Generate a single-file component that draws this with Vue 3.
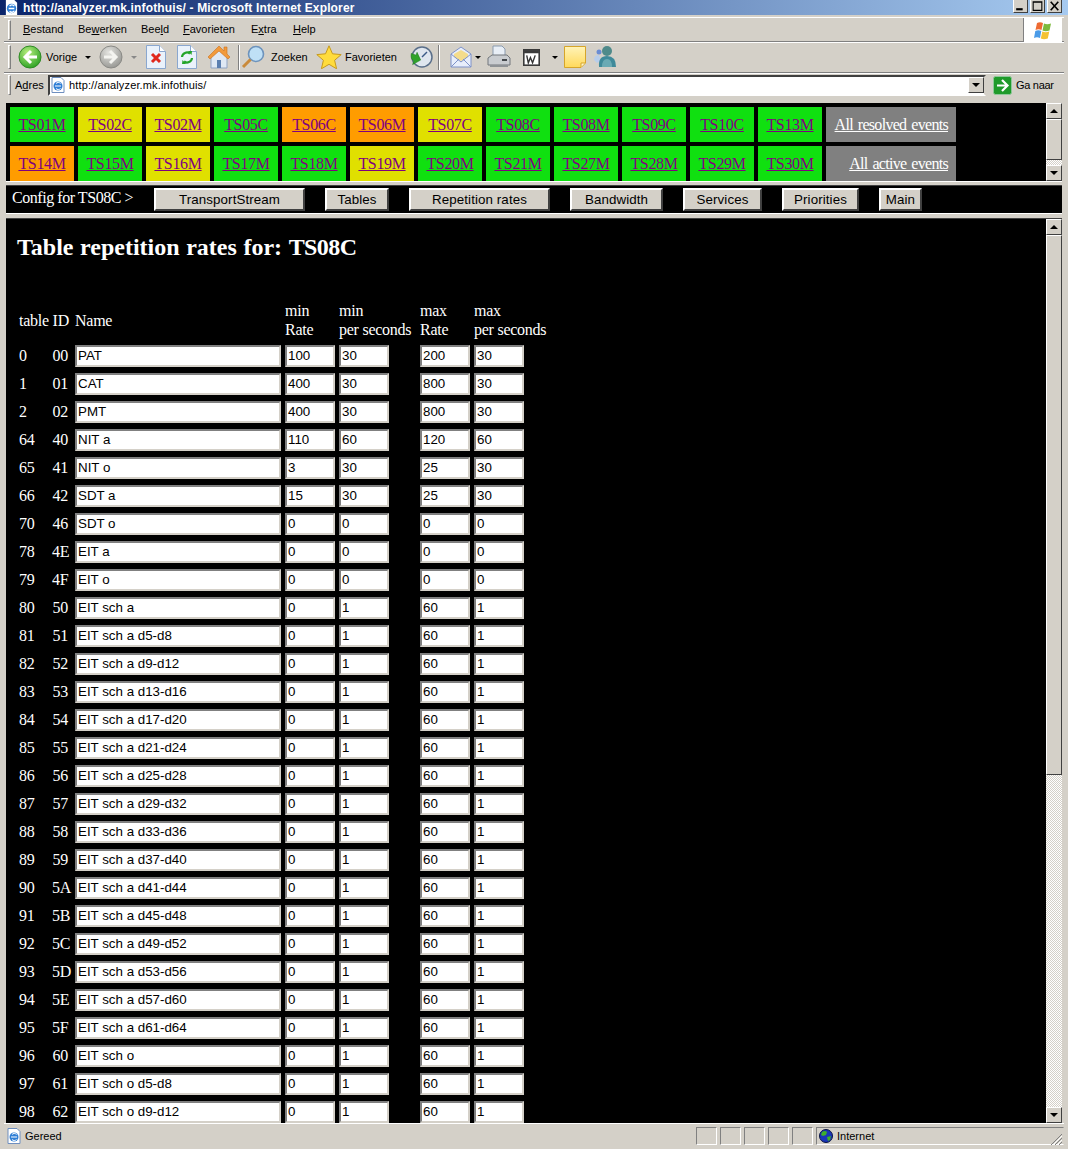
<script setup>
const row1 = [['TS01M','g'],['TS02C','y'],['TS02M','y'],['TS05C','g'],['TS06C','o'],['TS06M','o'],['TS07C','y'],['TS08C','g'],['TS08M','g'],['TS09C','g'],['TS10C','g'],['TS13M','g']]
const row2 = [['TS14M','o'],['TS15M','g'],['TS16M','y'],['TS17M','g'],['TS18M','g'],['TS19M','y'],['TS20M','g'],['TS21M','g'],['TS27M','g'],['TS28M','g'],['TS29M','g'],['TS30M','g']]
const buttons = [['TransportStream',151],['Tables',64],['Repetition rates',141],['Bandwidth',93],['Services',79],['Priorities',77],['Main',43]]
const rows = [
  ['0','00','PAT','100','30','200','30'],['1','01','CAT','400','30','800','30'],['2','02','PMT','400','30','800','30'],
  ['64','40','NIT a','110','60','120','60'],['65','41','NIT o','3','30','25','30'],['66','42','SDT a','15','30','25','30'],
  ['70','46','SDT o','0','0','0','0'],['78','4E','EIT a','0','0','0','0'],['79','4F','EIT o','0','0','0','0'],
  ['80','50','EIT sch a','0','1','60','1'],['81','51','EIT sch a d5-d8','0','1','60','1'],['82','52','EIT sch a d9-d12','0','1','60','1'],
  ['83','53','EIT sch a d13-d16','0','1','60','1'],['84','54','EIT sch a d17-d20','0','1','60','1'],['85','55','EIT sch a d21-d24','0','1','60','1'],
  ['86','56','EIT sch a d25-d28','0','1','60','1'],['87','57','EIT sch a d29-d32','0','1','60','1'],['88','58','EIT sch a d33-d36','0','1','60','1'],
  ['89','59','EIT sch a d37-d40','0','1','60','1'],['90','5A','EIT sch a d41-d44','0','1','60','1'],['91','5B','EIT sch a d45-d48','0','1','60','1'],
  ['92','5C','EIT sch a d49-d52','0','1','60','1'],['93','5D','EIT sch a d53-d56','0','1','60','1'],['94','5E','EIT sch a d57-d60','0','1','60','1'],
  ['95','5F','EIT sch a d61-d64','0','1','60','1'],['96','60','EIT sch o','0','1','60','1'],['97','61','EIT sch o d5-d8','0','1','60','1'],['98','62','EIT sch o d9-d12','0','1','60','1']
]
</script>

<template>
  <div class="window">
    <header class="title">
      <svg class="ie" viewBox="0 0 16 16"><path d="M2 0h9l3 3v13H2z" fill="#fff"/><circle cx="8" cy="9" r="5" fill="#2f7fd6"/><path d="M5 9h6M6 6.500a3 3 0 0 1 5 0M6 12a3 3 0 0 0 5-.5" stroke="#fff" stroke-width="1.500" fill="none"/></svg>
      <span class="title-text">http://analyzer.mk.infothuis/ - Microsoft Internet Explorer</span>
      <span class="winbtns">
        <span class="winbtn"><svg viewBox="0 0 12 10"><rect x="2" y="7" width="6" height="2" fill="#000"/></svg></span>
        <span class="winbtn"><svg viewBox="0 0 12 10"><path d="M2 1h8v8H2z M2 1.500h8" fill="none" stroke="#000"/></svg></span>
        <span class="winbtn close"><svg viewBox="0 0 12 10"><path d="M2.500 1l7 8M9.500 1l-7 8" stroke="#000" stroke-width="1.500"/></svg></span>
      </span>
    </header>

    <div class="bar menubar">
      <i class="grip"></i>
      <nav class="menu">
        <span class="m1"><u>B</u>estand</span>
        <span class="m2">Be<u>w</u>erken</span>
        <span class="m3">Bee<u>l</u>d</span>
        <span class="m4"><u>F</u>avorieten</span>
        <span class="m5">E<u>x</u>tra</span>
        <span class="m6"><u>H</u>elp</span>
      </nav>
      <div class="flag">
        <svg viewBox="0 0 20 19"><path d="M4 2q3-1.500 6 0l-1.500 7q-3-1.500-6 0z" fill="#ee6a32"/><path d="M11 2.500q3 1.500 7 0l-1.500 7q-4 1.500-7 0z" fill="#7dba3c"/><path d="M2.300 10q3-1.500 6 0L7 17q-3-1.500-6 0z" fill="#4a9be8"/><path d="M9.300 10.500q3 1.500 7 0l-1.500 7q-4 1.500-7 0z" fill="#f4c233"/></svg>
      </div>
    </div>

    <div class="bar toolbar">
      <i class="grip tall"></i>
      <svg class="ic24 back" viewBox="0 0 24 24"><defs><radialGradient id="gb" cx=".4" cy=".3" r=".8"><stop offset="0" stop-color="#b8ee80"/><stop offset="1" stop-color="#1f9a1a"/></radialGradient><radialGradient id="gy" cx=".4" cy=".3" r=".8"><stop offset="0" stop-color="#e4e4e0"/><stop offset="1" stop-color="#8f8f8b"/></radialGradient></defs><circle cx="12" cy="12" r="11" fill="url(#gb)" stroke="#2f8a25"/><path d="M13 6l-6 6 6 6M7.500 12H19" stroke="#fff" stroke-width="3" fill="none"/></svg>
      <span class="tl vorige">Vorige</span>
      <i class="caret c1"></i>
      <svg class="ic24 fwd" viewBox="0 0 24 24"><circle cx="12" cy="12" r="11" fill="url(#gy)" stroke="#8a8a86"/><path d="M11 6l6 6-6 6M16.500 12H5" stroke="#f4f4f0" stroke-width="3" fill="none"/></svg>
      <i class="caret c2 dim"></i>
      <svg class="ic-doc stop" viewBox="0 0 20 24"><path d="M.5.500h13l6 6v17H.5z" fill="#eaf2fb" stroke="#8aa7cf"/><path d="M13.500.500v6h6" fill="#fff" stroke="#8aa7cf"/><path d="M6 9l8 8M14 9l-8 8" stroke="#e0281c" stroke-width="3"/></svg>
      <svg class="ic-doc refresh" viewBox="0 0 20 24"><path d="M.5.500h13l6 6v17H.5z" fill="#eaf2fb" stroke="#8aa7cf"/><path d="M13.500.500v6h6" fill="#fff" stroke="#8aa7cf"/><path d="M5 12a5 5 0 0 1 8-3.500M15 13a5 5 0 0 1-8 3.500" stroke="#25a52a" stroke-width="2.200" fill="none"/><path d="M11 6l4 0-.5 4zM9 19l-4 0 .5-4z" fill="#25a52a"/></svg>
      <svg class="ic24 home" viewBox="0 0 24 24"><path d="M4 12v11h16V12l-8-7z" fill="#dfe8f4" stroke="#8fa3c2"/><path d="M1 12L12 1l5 5V2h3v7l3 3-2 2-9-8-9 8z" fill="#f29a3c" stroke="#c9701c" stroke-width=".6"/><rect x="10" y="15" width="4" height="8" fill="#5b7fb0"/></svg>
      <i class="sep s1"></i>
      <svg class="ic24 search" viewBox="0 0 24 24"><circle cx="15" cy="9" r="7.500" fill="#bfe0f6" stroke="#6d93bc" stroke-width="1.600"/><path d="M9.500 14.500L2 22" stroke="#c98a3a" stroke-width="3"/></svg>
      <span class="tl zoeken">Zoeken</span>
      <svg class="star" viewBox="0 0 26 24"><path d="M13 .8l3.500 8 8.700.8-6.600 5.700 2 8.500L13 19.300 5.400 23.800l2-8.500L.8 9.600l8.700-.8z" fill="#ffdc3c" stroke="#c79a1e"/></svg>
      <span class="tl favo">Favorieten</span>
      <svg class="ic24 hist" viewBox="0 0 24 24"><circle cx="13" cy="12" r="10" fill="#dfe6ee" stroke="#5a6f8a" stroke-width="1.500"/><path d="M13 12l5-5" stroke="#3b5a86" stroke-width="1.500"/><path d="M1 10l5 0 0-3 6 6-6 7 0-4q-4 0-5-6z" fill="#2fa32a" stroke="#1d7a1d" stroke-width=".5" transform="rotate(20 6 13)"/></svg>
      <i class="sep s2"></i>
      <svg class="mail" viewBox="0 0 22 24"><path d="M1 9L11 2l10 7v13H1z" fill="#e8eefb" stroke="#7e92c8"/><path d="M4 9l7-4 7 4v3l-7 4-7-4z" fill="#f4dc8c"/><path d="M1 22l8-8M21 22l-8-8M1 9l10 8 10-8" stroke="#7e92c8" fill="none"/></svg>
      <i class="caret c3"></i>
      <svg class="ic24 print" viewBox="0 0 24 24"><path d="M6 1h9l3 3v8H6z" fill="#e8eef6" stroke="#8a9bb0"/><path d="M1 13l4-3h15l3 3v7H1z" fill="#c9ccd0" stroke="#73777c"/><path d="M3 20h18v2H3z" fill="#8e9296"/><path d="M15 15h5" stroke="#44484c" stroke-width="2"/></svg>
      <svg class="edit" viewBox="0 0 16 16"><rect x=".5" y=".5" width="15" height="15" fill="#fff" stroke="#3a3a3a" stroke-width="2"/><rect x="1" y="1" width="14" height="3" fill="#3a3a3a"/><path d="M3.500 6l1.500 7 2-5 2 5 2.500-7" stroke="#333" stroke-width="1.300" fill="none"/></svg>
      <i class="caret c4"></i>
      <svg class="note" viewBox="0 0 22 22"><defs><linearGradient id="nt" x1="0" y1="0" x2="0" y2="1"><stop offset="0" stop-color="#fff3b8"/><stop offset="1" stop-color="#ffd95a"/></linearGradient></defs><path d="M.5.500h21V17l-4.500 4.500H.5z" fill="url(#nt)" stroke="#d6a52a"/><path d="M17 21v-4h4" fill="#fff6cc" stroke="#d6a52a"/></svg>
      <svg class="ic24 msn" viewBox="0 0 24 24"><circle cx="6" cy="7" r="2.500" fill="#6a8cd4"/><path d="M1 15q0-5 5-5l2 6-4 2z" fill="#b8cdea"/><circle cx="14" cy="6" r="5" fill="#4f8a8a"/><path d="M6 22q-1-11 8-11t9 11z" fill="#3f8a9a"/><path d="M9 22q0-8 5-8t5 8z" fill="#6aaab4"/></svg>
    </div>

    <div class="bar addrbar">
      <i class="grip"></i>
      <span class="adres">A<u>d</u>res</span>
      <div class="addr">
        <svg class="doc16" viewBox="0 0 16 16"><path d="M2 .5h9l3 3v12H2z" fill="#fff" stroke="#6f8fbf"/><circle cx="8" cy="9" r="4.500" fill="#2f7fd6"/><path d="M5 9h6M6 6.500a3 3 0 0 1 4.500 0M6 11.500a3 3 0 0 0 4.500 0" stroke="#fff" fill="none"/></svg>
        <span class="url">http://analyzer.mk.infothuis/</span>
        <span class="sb-btn combo"><i class="tri down"></i></span>
      </div>
      <svg class="go" viewBox="0 0 19 19"><rect x=".5" y=".5" width="18" height="18" rx="2" fill="#1f9a2a" stroke="#8fc89a"/><path d="M9 4l5.500 5.500L9 15M14 9.500H4" stroke="#fff" stroke-width="2.200" fill="none"/></svg>
      <span class="ganaar">Ga naar</span>
    </div>

    <main class="body">
      <section class="frame nav">
        <div class="grid">
          <div v-for="c in row1" :key="c[0]" class="cell" :class="c[1]"><a>{{ c[0] }}</a></div>
          <div class="cell gray"><a>All resolved events</a></div>
          <div v-for="c in row2" :key="c[0]" class="cell" :class="c[1]"><a>{{ c[0] }}</a></div>
          <div class="cell gray"><a>All active events</a></div>
        </div>
        <div class="scroll small">
          <span class="sb-btn"><i class="tri up"></i></span>
          <span class="thumb"></span>
          <span class="track"></span>
          <span class="sb-btn"><i class="tri down"></i></span>
        </div>
      </section>
      <div class="divider thin"></div>
      <section class="frame config">
        <span class="cfg">Config for TS08C &gt;</span>
        <span v-for="b in buttons" :key="b[0]" class="btn" :style="{ width: b[1] + 'px' }">{{ b[0] }}</span>
      </section>
      <div class="divider"></div>
      <section class="frame content">
        <div class="page">
          <h2>Table repetition rates for: <span class="tsid">TS08C</span></h2>
          <div class="table">
            <div class="th span2">table ID</div>
            <div class="th">Name</div>
            <div class="th">min<br>Rate</div>
            <div class="th">min<br>per seconds</div>
            <div class="th">max<br>Rate</div>
            <div class="th">max<br>per seconds</div>
            <template v-for="r in rows" :key="r[0]">
              <div class="td">{{ r[0] }}</div>
              <div class="td id">{{ r[1] }}</div>
              <div class="field name">{{ r[2] }}</div>
              <div class="field">{{ r[3] }}</div>
              <div class="field">{{ r[4] }}</div>
              <div class="field">{{ r[5] }}</div>
              <div class="field">{{ r[6] }}</div>
            </template>
          </div>
        </div>
        <div class="scroll">
          <span class="sb-btn"><i class="tri up"></i></span>
          <span class="thumb long"></span>
          <span class="track"></span>
          <span class="sb-btn"><i class="tri down"></i></span>
        </div>
      </section>
    </main>

    <footer class="status">
      <svg class="doc16 st" viewBox="0 0 16 16"><path d="M2 .5h9l3 3v12H2z" fill="#fff" stroke="#6f8fbf"/><circle cx="8" cy="9" r="4.500" fill="#2f7fd6"/><path d="M5 9h6M6 6.500a3 3 0 0 1 4.500 0M6 11.500a3 3 0 0 0 4.500 0" stroke="#fff" fill="none"/></svg>
      <span class="gereed">Gereed</span>
      <i class="pane" v-for="n in 5" :key="n"></i>
      <div class="zone">
        <svg class="globe" viewBox="0 0 14 14"><circle cx="7" cy="7" r="6.500" fill="#1a35b8" stroke="#0a1440"/><path d="M3 3q3-2 5 0l-1 3-3 1-2-1zM8 8l4-1-1 4-2 1z" fill="#3fae2a"/></svg>
        <span>Internet</span>
      </div>
      <svg class="sizer" viewBox="0 0 12 12"><path d="M12 1L1 12M12 5L5 12M12 9L9 12" stroke="#808080"/><path d="M12 3L3 12M12 7L7 12" stroke="#fff"/></svg>
    </footer>
  </div>
</template>

<style scoped>
.window {
  width: 1068px;
  height: 1149px;
  overflow: hidden;
  display: flex;
  flex-direction: column;
  background: #d4d0c8;
  font-family: "Liberation Sans", Arial, sans-serif;
  position: relative;
}
.title {
  height: 15px;
  flex: none;
  display: flex;
  align-items: center;
  padding-left: 4px;
  background: linear-gradient(90deg, #0a246a, #a6caf0);
  color: #fff;
  font-weight: bold;
  font-size: 12px;
}
.ie { width: 15px; height: 15px; margin-right: 4px; }
.title-text { white-space: nowrap; letter-spacing: .15px; }
.winbtns { margin-left: auto; margin-right: 6px; display: flex; gap: 2px; align-self: flex-start; }
.winbtn {
  width: 15px; height: 13px; background: #d4d0c8; box-sizing: border-box;
  border-right: 1px solid #404040; border-bottom: 1px solid #404040;
  border-left: 1px solid #fff; display: flex;
}
.winbtn svg { width: 100%; height: 100%; }
.bar {
  display: flex;
  align-items: center;
  flex: none;
  margin: 0 4px;
  padding-left: 4px;
  font-size: 11px;
  color: #000;
  border-bottom: 1px solid #808080;
  box-shadow: 0 1px 0 #fff;
}
.menubar { height: 23px; margin-top: 2px; border-top: 1px solid #fff; position: relative; }
.toolbar { height: 30px; }
.addrbar { height: 24px; margin-bottom: 6px; border-bottom: none; box-shadow: none; }
.grip {
  height: 18px; flex: none;
  border: 1px solid; border-color: #fff #808080 #808080 #fff;
  background: #d4d0c8;
  box-sizing: content-box;
  width: 1px;
}
.grip.tall { height: 22px; }
.menu { display: flex; padding-bottom: 2px; }
.menu span { white-space: nowrap; }
.m1 { margin-left: 12px; width: 55px; }
.m2 { width: 63px; }
.m3 { width: 42px; }
.m4 { width: 68px; }
.m5 { width: 42px; }
.flag {
  margin-left: auto;
  width: 39px; height: 24px;
  background: #fff;
  margin-right: 2px;
  margin-top: 1px;
  display: flex; align-items: center; justify-content: center;
  border-left: 1px solid #808080;
  box-sizing: border-box;
}
.flag svg { width: 20px; height: 19px; }
.ic24 { width: 24px; height: 24px; flex: none; }
.ic-doc { width: 20px; height: 24px; flex: none; }
.tl { white-space: nowrap; }
.caret { width: 0; height: 0; border: 3px solid transparent; border-top: 3px solid #000; border-bottom: 0; flex: none; }
.caret.dim { border-top-color: #888; }
.sep { width: 1px; height: 25px; background: #808080; border-right: 1px solid #fff; flex: none; }
.back { margin-left: 7px; }
.vorige { margin-left: 4px; width: 37px; }
.c1 { margin-left: 2px; }
.fwd { margin-left: 8px; }
.c2 { margin-left: 8px; }
.stop { margin-left: 9px; }
.refresh { margin-left: 11px; }
.home { margin-left: 10px; }
.s1 { margin-left: 7px; }
.search { margin-left: 1px; }
.zoeken { margin-left: 6px; width: 37px; }
.star { width: 26px; height: 24px; margin-left: 8px; flex: none; }
.favo { margin-left: 3px; width: 52px; }
.hist { margin-left: 12px; }
.s2 { margin-left: 5px; }
.mail { width: 22px; height: 24px; margin-left: 10px; flex: none; }
.c3 { margin-left: 3px; }
.print { margin-left: 6px; }
.edit { width: 17px; height: 17px; margin-left: 12px; flex: none; }
.c4 { margin-left: 12px; }
.note { width: 22px; height: 22px; margin-left: 6px; flex: none; }
.msn { margin-left: 7px; }
.adres { margin-left: 4px; width: 33px; white-space: nowrap; }
.addr {
  width: 938px; height: 21px; box-sizing: border-box;
  display: flex; align-items: center;
  background: #fff;
  border: 2px solid; border-color: #404040 #d4d0c8 #fff #404040;
  padding-left: 0;
}
.doc16 { width: 16px; height: 16px; flex: none; }
.url { margin-left: 3px; white-space: nowrap; letter-spacing: .14px; }
.combo { margin-left: auto; height: 17px; }
.go { width: 19px; height: 19px; margin-left: 7px; flex: none; }
.ganaar { margin-left: 4px; white-space: nowrap; letter-spacing: -.3px; }

.body { flex: 1; min-height: 0; margin: 0 6px; display: flex; flex-direction: column; background: #000; }
.frame { background: #000; display: flex; flex: none; }
.nav { height: 78px; overflow: hidden; }
.grid {
  flex: 1;
  padding: 4px 0 0 4px;
  display: grid;
  grid-template-columns: repeat(12, 64px) 130px;
  grid-auto-rows: 35px;
  gap: 4px;
  font-family: "Liberation Serif", "Times New Roman", serif;
  font-size: 16px;
}
.cell { display: flex; align-items: center; justify-content: center; }
.cell a { color: #800080; text-decoration: underline; white-space: nowrap; letter-spacing: -.35px; }
.g { background: #10e010; }
.y { background: #e0e000; }
.o { background: #ff9c00; }
.gray { background: #808080; justify-content: flex-end; padding-right: 8px; }
.gray a { color: #fff; letter-spacing: -.7px; word-spacing: 1.6px; }
.scroll { width: 16px; display: flex; flex-direction: column; flex: none; }
.sb-btn {
  width: 16px; height: 16px; box-sizing: border-box; flex: none;
  background: #d4d0c8;
  border: 1px solid; border-color: #fff #404040 #404040 #fff;
  display: flex; align-items: center; justify-content: center;
}
.tri { width: 0; height: 0; border-left: 4px solid transparent; border-right: 4px solid transparent; }
.tri.up { border-bottom: 4px solid #000; }
.tri.down { border-top: 4px solid #000; }
.thumb {
  height: 41px; flex: none; box-sizing: border-box; background: #d4d0c8;
  border: 1px solid; border-color: #fff #404040 #404040 #fff;
}
.thumb.long { height: 540px; }
.track {
  flex: 1; min-height: 0;
  background: conic-gradient(#d4d0c8 25%, #fff 0 50%, #d4d0c8 0 75%, #fff 0) 0 0 / 2px 2px;
}
.divider {
  height: 6px; flex: none; box-sizing: border-box;
  background: #d4d0c8;
  border-top: 1px solid #fff;
  border-bottom: 1px solid #404040;
}
.divider.thin { height: 5px; }
.config {
  height: 27px; align-items: flex-start; gap: 20px;
  padding-top: 2px; box-sizing: border-box;
}
.cfg {
  font-family: "Liberation Serif", "Times New Roman", serif;
  font-size: 16px; color: #fff; white-space: nowrap;
  width: 122px; margin-left: 6px; line-height: 18px; margin-top: 1px;
  letter-spacing: -.45px;
}
.btn {
  height: 23px; box-sizing: border-box; flex: none;
  background: #d4d0c8;
  border: 2px solid; border-color: #fff #404040 #404040 #fff;
  font-size: 13.33px; color: #000;
  letter-spacing: .1px;
  display: flex; align-items: center; justify-content: center;
  white-space: nowrap;
}
.content { flex: 1; min-height: 0; }
.page {
  flex: 1; min-width: 0; overflow: hidden;
  padding: 14px 0 0 11px;
  color: #fff;
  font-family: "Liberation Serif", "Times New Roman", serif;
  font-size: 16px;
}
h2 { margin: 0 0 42px; font-size: 24px; line-height: 28px; font-weight: bold; white-space: nowrap; word-spacing: .6px; }
.tsid { letter-spacing: -.6px; }
.table {
  display: grid;
  grid-template-columns: 33px 23px 210px 54px 81px 54px 80px;
  grid-auto-rows: 22px;
  grid-template-rows: 36px;
  row-gap: 6px;
  margin-left: 2px;
  align-items: center;
}
.th { line-height: 19px; white-space: nowrap; margin-bottom: 2px; letter-spacing: -.25px; }
.span2 { grid-column: span 2; }
.td { line-height: 22px; letter-spacing: -.3px; }
.id { width: 16px; text-align: right; }
.field {
  width: 50px; height: 22px; box-sizing: border-box;
  background: #fff; color: #000;
  border: 2px solid; border-color: #808080 #d4d0c8 #d4d0c8 #808080;
  font-family: "Liberation Sans", Arial, sans-serif;
  font-size: 13.33px; line-height: 18px;
  padding-left: 1px; white-space: nowrap; overflow: hidden;
}
.field.name { width: 206px; }
.status {
  height: 26px; flex: none; box-sizing: border-box;
  margin: 0 4px; padding: 3px 0 4px;
  display: flex; align-items: center;
  font-size: 11px; color: #000;
  border-top: 1px solid #fff;
  position: relative;
}
.st { margin-left: 2px; }
.gereed { margin-left: 3px; width: 671px; white-space: nowrap; }
.pane {
  width: 21px; height: 18px; box-sizing: border-box; margin-right: 3px; flex: none;
  border: 1px solid; border-color: #808080 #fff #fff #808080;
}
.zone {
  flex: 1; height: 18px; box-sizing: border-box; display: flex; align-items: center;
  border: 1px solid; border-color: #808080 #d4d0c8 #fff #808080;
  padding-left: 2px; gap: 4px;
}
.globe { width: 14px; height: 14px; }
.sizer { width: 12px; height: 12px; position: absolute; right: 2px; bottom: 4px; }
</style>

<style>
html, body { margin: 0; background: #d4d0c8; }
</style>
